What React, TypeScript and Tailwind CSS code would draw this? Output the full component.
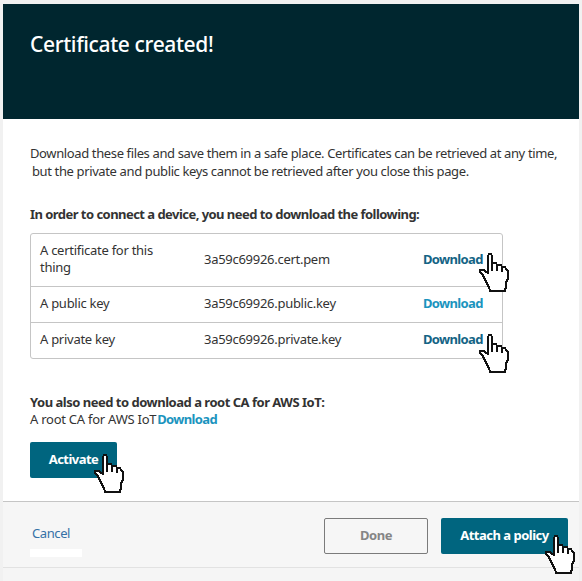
import type { ReactNode } from "react";

function Hand({ className }: { className: string }) {
  return (
    <svg viewBox="0 0 31 40" width="31" height="40" className={"pointer-events-none absolute z-10 " + className} shapeRendering="crispEdges">
      <path
        d="M9 3L10 1H12L13 3V10H17L18 12H22L23 14H26L27 16L29 18V26L27 29V33L26 38H11L10 34L8 31L7 28L5 25L4 22L1 19V17H5L7 19L9 20Z"
        fill="#fff"
        stroke="#111"
        strokeWidth="2"
      />
      <path d="M13 10V18M18 11V18M23 13V19" fill="none" stroke="#111" strokeWidth="2" />
    </svg>
  );
}

function Row({ name, file, link, className, cursor }: { name: ReactNode; file: string; link: string; className: string; cursor?: string }) {
  return (
    <div className={"relative flex items-center border-[#c5c5c5] pl-[9px] " + className}>
      <div className="w-[164px] tracking-[-0.27px]">{name}</div>
      <div className="w-[219px] tracking-[-0.28px]">{file}</div>
      <a className={"font-bold tracking-[-0.65px] " + link}>Download</a>
      {cursor && <Hand className={cursor} />}
    </div>
  );
}

export default function App() {
  return (
    <div className="h-[581px] w-[582px] overflow-hidden bg-[#f1f1f1] px-[3px] pt-1 font-['Noto_Sans',sans-serif] text-[13px] leading-[17px] text-[#333]">
      <div className="h-[563px] w-[576px] bg-white">
        <header className="h-[115px] bg-[#00262f] pt-[25px] pl-[27px]">
          <h1 className="text-[21px] leading-[30px] font-medium tracking-[-0.37px] whitespace-nowrap text-white">Certificate created!</h1>
        </header>
        <main className="h-[382px] pt-[25px] pl-[27px]">
          <p className="leading-[18px] whitespace-nowrap">
            <span className="block tracking-[-0.375px]">Download these files and save them in a safe place. Certificates can be retrieved at any time,</span>
            <span className="block pl-[2px] tracking-[-0.375px]">but the private and public keys cannot be retrieved after you close this page.</span>
          </p>
          <p className="mt-[26px] font-bold tracking-[-0.54px] whitespace-nowrap">In order to connect a device, you need to download the following:</p>
          <div className="mt-[10px] w-[473px] rounded-[3px] border border-[#c5c5c5]">
            <Row name={<>A certificate for this<br />thing</>} file="3a59c69926.cert.pem" link="text-[#146485]" className="h-[52px] pb-[2px]" cursor="top-[19px] left-[448px]" />
            <Row name="A public key" file="3a59c69926.public.key" link="text-[#1b94be]" className="h-9 border-t pb-[2px]" />
            <Row name="A private key" file="3a59c69926.private.key" link="text-[#146485]" className="h-9 border-t pb-[2px]" cursor="top-[11px] left-[448px]" />
          </div>
          <p className="mt-[35px] font-bold tracking-[-0.49px] whitespace-nowrap">You also need to download a root CA for AWS IoT:</p>
          <p className="flex gap-px whitespace-nowrap">
            <span className="tracking-[-0.25px]">A root CA for AWS IoT</span>
            <a className="font-bold tracking-[-0.65px] text-[#1b94be]">Download</a>
          </p>
          <button className="relative mt-[14px] block h-9 w-[87px] rounded-[2px] bg-[#00657f] pb-[2px] text-center font-bold tracking-[-0.55px] text-white">
            Activate
            <Hand className="top-3 left-[64px]" />
          </button>
        </main>
        <footer className="flex h-[66px] border-t border-[#c5c5c5] bg-[#f6f6f6] pr-[11px] pl-[27px]">
          <div className="w-[294px] pt-[23px]">
            <a className="block pl-[2px] tracking-[-0.4px] text-[#3571a6]">Cancel</a>
            <div className="mt-[7px] h-2 w-[52px] bg-white" />
          </div>
          <button className="mt-4 h-9 w-[104px] rounded-[2px] border border-[#7b7b7b] pb-[2px] font-bold tracking-[-0.5px] text-[#858585]">Done</button>
          <button className="relative mt-4 ml-[13px] h-9 w-[127px] rounded-[2px] bg-[#00657f] pb-[2px] font-bold tracking-[-0.5px] whitespace-nowrap text-white">
            Attach a policy
            <Hand className="top-[17px] left-[104px]" />
          </button>
        </footer>
      </div>
      <div className="h-[14px] border-t border-[#e2e2e2] bg-[#f5f5f5]" />
    </div>
  );
}
